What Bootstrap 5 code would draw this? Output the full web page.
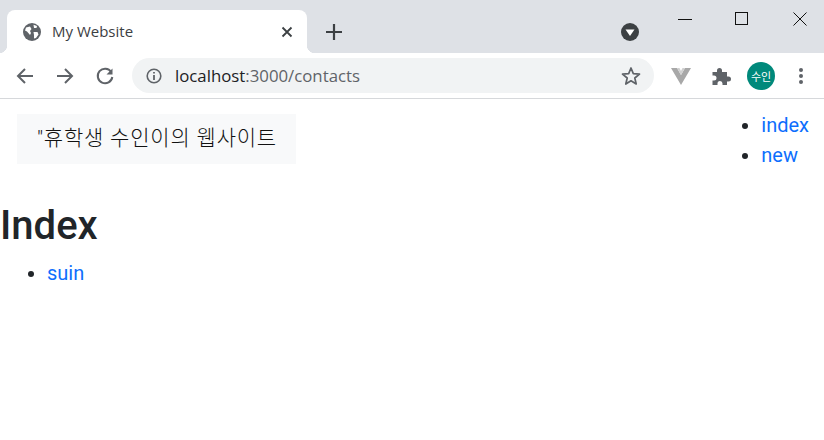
<!DOCTYPE html>
<html lang="ko">
<head>
  <meta charset="UTF-8">
  <meta name="viewport" content="width=device-width, initial-scale=1.0">
  <title>My Website</title>

  <link href="https://cdn.jsdelivr.net/npm/bootstrap@5.3.1/dist/css/bootstrap.min.css" rel="stylesheet">
  <style>
    body { font-family: Roboto, "Noto Sans CJK KR", sans-serif; overflow: hidden; background: #fff; }
    a { text-decoration: none; color: #0d6efd; }

    /* browser chrome */
    .tab-strip { height: 53px; background: #dee1e6; padding-left: 7px; }
    .win-tab { position: relative; width: 300px; height: 43px; margin-top: 10px; background: #fff; border-radius: 8px 8px 0 0; padding: 0 14px 0 16px; font: 15px "Open Sans", sans-serif; color: #3c4043; }
    .win-tab::before, .win-tab::after { content: ""; position: absolute; bottom: 0; width: 8px; height: 8px; }
    .win-tab::before { left: -8px; background: radial-gradient(circle at 0 0, #dee1e6 8px, #fff 8.5px); }
    .win-tab::after { right: -8px; background: radial-gradient(circle at 100% 0, #dee1e6 8px, #fff 8.5px); }
    .tab-title { margin-left: 11px; padding-bottom: 2px; }
    .new-tab { margin-left: 17px; margin-top: 10px; }
    .media-btn { margin-left: 277px; margin-top: 10px; }
    .win-btns { margin-left: auto; margin-right: -5px; }
    .win-btn { width: 58px; height: 37px; }
    .win-btn:first-child { width: 56px; }
    .tool-row { height: 46px; border-bottom: 1px solid #d6d8db; padding-left: 15px; }
    .tool-icon { width: 20px; height: 20px; flex: none; }
    .fwd-icon { margin-left: 20px; }
    .addr-bar { width: 522px; height: 35px; margin-left: 17px; margin-right: 17px; background: #f1f3f4; border-radius: 18px; padding: 0 13px 0 14px; font: 16.8px "Open Sans", sans-serif; color: #5f6368; }
    .addr-host { color: #202124; }
    .addr-text { margin-left: 13px; }
    .ext-icon { margin-left: 20px; }
    .avatar-dot { width: 28px; height: 28px; border-radius: 50%; background: #00897b; color: #fff; font: 11px "Noto Sans CJK KR", sans-serif; }

    /* page */
    .page-top { padding-top: 11px; }
    .site-nav { margin: 4px 0 0 17px; height: 50px; width: 279px; padding: 0 20px; background: #f8f9fa; font-size: 21px; font-weight: 300; letter-spacing: .8px; color: #111; white-space: nowrap; }
    .link-list { padding-left: 47px; font-size: 20px; margin-bottom: 0; }
    .side-list { margin-right: 15px; }
    .page-title { font-size: 40px; font-weight: 500; line-height: 48px; margin: 32px 0 8px; color: #212529; }
  </style>
</head>

<body>
  <div class="tab-strip d-flex align-items-start">
    <div class="win-tab d-flex align-items-center">
      <svg width="18" height="18" viewBox="0 0 18 18"><circle cx="9" cy="9" r="9" fill="#5f6368"/><path d="M3 4.5 7 3.5 8.5 6 7 8 8 10 7 12 4 8.5 2 7.5ZM10.5 1.8 14 3 13.500 5 11 5ZM10.500 9 14.500 9 15.500 11.500 13 15 11 15.500 11 12Z" fill="#fff"/></svg>
      <span class="tab-title flex-grow-1">My Website</span>
      <svg width="12" height="12" viewBox="0 0 12 12"><path d="M1.5 1.5 10.5 10.5M10.5 1.5 1.5 10.5" stroke="#3c4043" stroke-width="1.8"/></svg>
    </div>
    <svg class="new-tab" width="20" height="43" viewBox="0 0 20 43"><path d="M10 13V29M2 21H18" transform="translate(0 1)" stroke="#3c4043" stroke-width="2.2" fill="none"/></svg>
    <svg class="media-btn" width="18" height="43" viewBox="0 0 18 43"><circle cx="9" cy="22" r="9" fill="#3c4043"/><path d="M4.5 19.5H13.5L9 26Z" fill="#fff"/></svg>
    <div class="win-btns d-flex">
      <div class="win-btn d-flex align-items-center justify-content-center"><svg width="14" height="14" viewBox="0 0 14 14"><path d="M0 7.5H14" stroke="#111" stroke-width="1" fill="none"/></svg></div>
      <div class="win-btn d-flex align-items-center justify-content-center"><svg width="14" height="14" viewBox="0 0 14 14"><rect x=".5" y=".5" width="12" height="12" stroke="#111" fill="none"/></svg></div>
      <div class="win-btn d-flex align-items-center justify-content-center"><svg width="14" height="14" viewBox="0 0 14 14"><path d="M.5.5 13.5 13.5M13.5.5 .5 13.5" stroke="#111" fill="none"/></svg></div>
    </div>
  </div>

  <div class="tool-row d-flex align-items-center">
    <svg class="tool-icon" viewBox="0 0 20 20"><path d="M18 10H3M10 3 3 10 10 17" stroke="#5f6368" stroke-width="2" fill="none"/></svg>
    <svg class="tool-icon fwd-icon me-3" viewBox="0 0 20 20"><path d="M2 10H17M10 3 17 10 10 17" stroke="#5f6368" stroke-width="2" fill="none"/></svg>
    <svg class="tool-icon ms-1" viewBox="0 0 20 20"><path d="M16.2 6A7.3 7.3 0 1 0 17.3 11" stroke="#5f6368" stroke-width="2" fill="none"/><path d="M17.5 2.5V8.5H11.5Z" fill="#5f6368"/></svg>
    <div class="addr-bar d-flex align-items-center">
      <svg width="16" height="16" viewBox="0 0 16 16"><circle cx="8" cy="8" r="6.8" stroke="#5f6368" stroke-width="1.6" fill="none"/><path d="M8 7V12M8 4V5.6" stroke="#5f6368" stroke-width="1.8"/></svg>
      <span class="addr-text flex-grow-1"><span class="addr-host">localhost</span>:3000/contacts</span>
      <svg width="20" height="20" viewBox="0 0 20 20"><path d="M10 2 12.3 7.6 18.5 8.1 13.8 12 15.2 18 10 14.8 4.8 18 6.2 12 1.5 8.1 7.7 7.6Z" stroke="#5f6368" stroke-width="1.7" stroke-linejoin="round" fill="none"/></svg>
    </div>
    <svg class="tool-icon" viewBox="0 0 20 20"><path d="M0 2H6L10 9 14 2H20L10 19Z" fill="#a8a8a8"/><path d="M6 2H8.5L10 5 11.5 2H14L10 9Z" fill="#d0d0d0"/></svg>
    <svg class="tool-icon ext-icon me-3" viewBox="0 0 20 20"><path d="M1.5 6H6V4.5A2.5 2.5 0 0 1 11 4.5V6H16V10.5H17.500A2.500 2.500 0 0 1 17.500 15.500H16V19H11.500V17.500A2.500 2.500 0 0 0 6.500 17.500V19H1.500V14.500H3A2.500 2.500 0 0 0 3 9.500H1.500Z" fill="#5f6368"/></svg>
    <div class="avatar-dot d-flex align-items-center justify-content-center">수인</div>
    <svg class="tool-icon ms-3" viewBox="0 0 20 20"><circle cx="10" cy="4" r="2" fill="#5f6368"/><circle cx="10" cy="10" r="2" fill="#5f6368"/><circle cx="10" cy="16" r="2" fill="#5f6368"/></svg>
  </div>

  <div class="page-top d-flex justify-content-between align-items-start">
    <nav class="site-nav d-flex align-items-center">"휴학생 수인이의 웹사이트</nav>
    <ul class="link-list side-list">
      <li><a href="#">index</a></li>
      <li><a href="#">new</a></li>
    </ul>
  </div>
  <h1 class="page-title">Index</h1>
  <ul class="link-list">
    <li><a href="#">suin</a></li>
  </ul>

  <script src="https://cdn.jsdelivr.net/npm/bootstrap@5.3.1/dist/js/bootstrap.bundle.min.js"></script>
</body>
</html>
